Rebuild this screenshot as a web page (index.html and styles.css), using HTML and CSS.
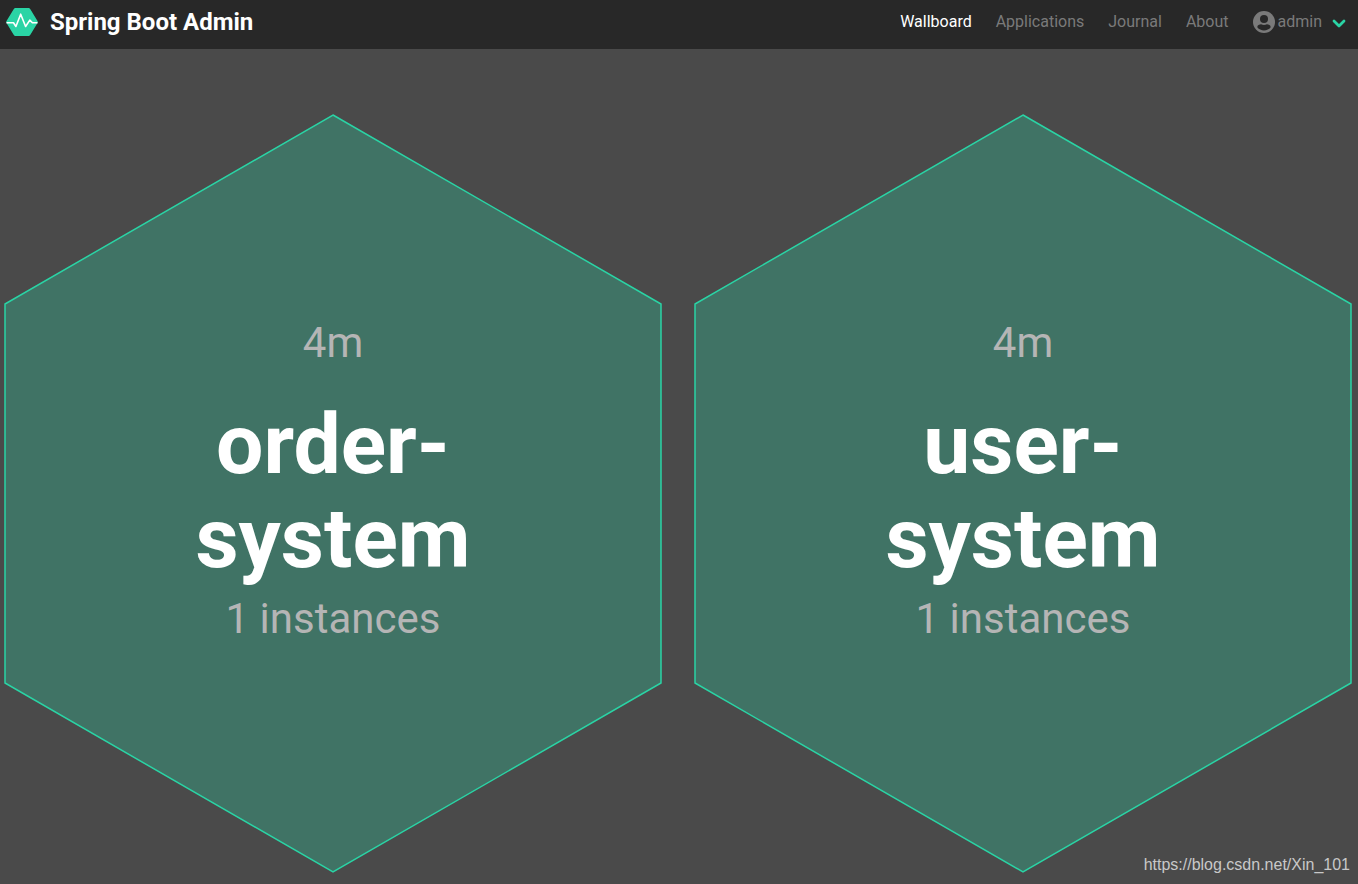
FILE: index.html
```html
<!DOCTYPE html>
<html lang="en">
<head>
<meta charset="utf-8">
<title>Spring Boot Admin</title>
<link rel="stylesheet" href="styles.css">
</head>
<body>
<header class="navbar">
  <a class="brand" href="#">
    <svg class="brand-logo" viewBox="0 0 32 28" aria-hidden="true">
      <path d="M9.5 0h13a2 2 0 0 1 1.7 1L31.5 13a2 2 0 0 1 0 2L24.2 27a2 2 0 0 1-1.7 1h-13a2 2 0 0 1-1.7-1L.5 15a2 2 0 0 1 0-2L7.8 1a2 2 0 0 1 1.7-1z" fill="#2ad4a5"/>
      <path d="M.5 14.800h7l2.400 3.700 4.800-12.300 4.900 12.300 4.200-6.400 2.600 2.700h5.100" fill="none" stroke="#fff" stroke-width="1.600" stroke-linejoin="round"/>
    </svg>
    <span>Spring Boot Admin</span>
  </a>
  <nav class="menu">
    <a class="menu-item active" href="#">Wallboard</a>
    <a class="menu-item" href="#">Applications</a>
    <a class="menu-item" href="#">Journal</a>
    <a class="menu-item" href="#">About</a>
    <button class="menu-item user" type="button">
      <svg class="user-icon" viewBox="0 0 22 22" aria-hidden="true">
        <circle cx="11" cy="11" r="11" fill="#7a7a7a"/>
        <circle cx="11" cy="8" r="4" fill="#282828"/>
        <path d="M4.300 16.200c0-2 2.100-2.900 3.800-2.900 1.800.8 4 .8 5.800 0 1.700 0 3.800.9 3.800 2.900a8.500 8.500 0 0 1-13.400 0z" fill="#282828"/>
      </svg>
      <span>admin</span>
      <svg class="chevron" viewBox="0 0 14 10" aria-hidden="true">
        <path d="M2 2l5 5 5-5" fill="none" stroke="#2ad4a5" stroke-width="2.800" stroke-linecap="round" stroke-linejoin="round"/>
      </svg>
    </button>
  </nav>
</header>
<main class="wallboard">
  <a class="hexagon" href="#">
    <svg class="hexagon-shape" viewBox="0 0 656 758" aria-hidden="true"><path d="M328 1L656 190v379L328 758 0 569V190z"/></svg>
    <span class="uptime">4m</span>
    <h1 class="name">order-<wbr>system</h1>
    <span class="instances">1 instances</span>
  </a>
  <a class="hexagon" href="#">
    <svg class="hexagon-shape" viewBox="0 0 656 758" aria-hidden="true"><path d="M328 1L656 190v379L328 758 0 569V190z"/></svg>
    <span class="uptime">4m</span>
    <h1 class="name">user-<wbr>system</h1>
    <span class="instances">1 instances</span>
  </a>
</main>
<div class="watermark">https://blog.csdn.net/Xin_101</div>
</body>
</html>
```

FILE: styles.css
```css
* {
  box-sizing: border-box;
}

body {
  position: relative;
  margin: 0;
  min-height: 100vh;
  background: #4a4a4a;
  font-family: Roboto, "Liberation Sans", sans-serif;
  font-size: 16px;
}

a {
  color: inherit;
  text-decoration: none;
}

.navbar {
  display: flex;
  align-items: center;
  justify-content: space-between;
  padding: 0 12px 5px 6px;
  height: 49px;
  background: #282828;
}

.brand {
  display: flex;
  align-items: center;
  gap: 12px;
  color: #fff;
  font-size: 24px;
  font-weight: 700;
}

.brand-logo {
  width: 32px;
  height: 28px;
}

.menu {
  display: flex;
  align-items: center;
  gap: 24px;
}

.menu-item {
  color: #7a7a7a;
  line-height: 24px;
}

.menu-item.active {
  color: #fff;
}

.user {
  display: flex;
  align-items: center;
  gap: 3px;
  padding: 0;
  border: 0;
  background: none;
  font: inherit;
  line-height: 24px;
}

.user-icon {
  width: 22px;
  height: 22px;
}

.chevron {
  width: 14px;
  height: 10px;
  margin: 3px 0 0 7px;
}

.wallboard {
  display: grid;
  grid-template-columns: 1fr 1fr;
  gap: 34px;
  padding: 65px 7px 12px 5px;
}

.hexagon {
  position: relative;
  display: flex;
  flex-direction: column;
  align-items: center;
  justify-content: center;
  aspect-ratio: 656 / 758;
  padding-bottom: 24px;
  text-align: center;
}

.hexagon-shape {
  position: absolute;
  inset: 0;
  width: 100%;
  height: 100%;
  overflow: visible;
  fill: rgba(42, 212, 165, 0.3);
  stroke: #2ad4a5;
  stroke-width: 1.5;
}

.uptime,
.instances {
  position: relative;
  color: #b5b5b5;
  font-size: 42px;
  line-height: 50px;
}

.name {
  position: relative;
  width: min-content;
  margin: 30px 0 8px;
  color: #fff;
  font-size: 84px;
  font-weight: 700;
  line-height: 94px;
}

.watermark {
  position: absolute;
  right: 8px;
  bottom: 10px;
  color: #c8c8c8;
  font-family: "Liberation Sans", Arial, sans-serif;
  font-size: 16px;
  line-height: 18px;
}
```
